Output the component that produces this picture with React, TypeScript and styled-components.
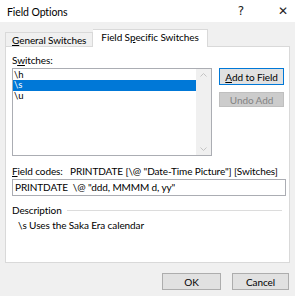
import React from "react";
import styled, { createGlobalStyle } from "styled-components";

const Global = createGlobalStyle`
  html, body { margin: 0; padding: 0; }
  body {
    width: 295px; height: 296px; overflow: hidden;
    background: #f0f0f0;
    font-family: Lato, "Noto Sans", sans-serif;
    font-size: 10px; letter-spacing: -0.1px; color: #000;
  }
`;

const Dialog = styled.div`
  width: 295px; height: 296px; display: flex; flex-direction: column;
  background: #f0f0f0;
`;

const TitleBar = styled.div`
  height: 22px; background: #fff; display: flex; align-items: center;
  padding-left: 7px; padding-right: 5px; font-size: 10.5px;
`;
const Title = styled.div` flex: 1; padding-top: 1px; `;
const TitleBtn = styled.div<{ $w: number; $gap?: number }>`
  width: ${p => p.$w}px; margin-left: ${p => p.$gap ?? 0}px;
  text-align: center; font-size: 12px; color: #222; font-family: "DejaVu Sans", sans-serif;
`;

const TabRow = styled.div`
  height: 24px; display: flex; align-items: flex-end; padding-left: 5px;
`;
const Tab = styled.div<{ $active?: boolean }>`
  height: ${p => (p.$active ? 18 : 14)}px;
  padding: 0 ${p => (p.$active ? 8 : 6)}px;
  display: flex; align-items: center;
  background: ${p => (p.$active ? "#fff" : "#f0f0f0")};
  border: 1px solid #d9d9d9; border-bottom: none;
  ${p => (p.$active ? "margin-bottom:-1px; position:relative; z-index:1; border-left:none;" : "")}
  box-sizing: border-box;
  padding-bottom: ${p => (p.$active ? 3 : 0)}px;
`;

const Panel = styled.div`
  margin: 0 5px; height: 217px; background: #fff; border: 1px solid #d9d9d9;
  box-sizing: border-box; padding: 6px 5px 0 6px; display: flex; flex-direction: column;
`;

const Label = styled.div` height: 14px; line-height: 14px; `;

const SwitchRow = styled.div` display: flex; gap: 7px; margin-top: 1px; `;

const ListBox = styled.div`
  width: 200px; height: 88px; border: 1px solid #abadb3; box-sizing: border-box;
  display: flex;
`;
const ListItems = styled.div` flex: 1; padding-top: 1px; `;
const ListItem = styled.div<{ $sel?: boolean }>`
  height: 10.4px; line-height: 10.4px; padding-left: 1px; font-size: 9.5px;
  background: ${p => (p.$sel ? "#0078d7" : "transparent")};
  color: ${p => (p.$sel ? "#fff" : "#000")};
`;
const ScrollBar = styled.div`
  width: 15px; background: #f0f0f0; display: flex; flex-direction: column;
  justify-content: space-between; align-items: center; padding: 4px 0;
`;

const ButtonCol = styled.div` display: flex; flex-direction: column; gap: 7px; `;
const Button = styled.div<{ $w: number; $variant?: "default" | "disabled" }>`
  width: ${p => p.$w}px; height: ${p => (p.$variant === "disabled" ? 15 : 17)}px;
  box-sizing: border-box; display: flex; align-items: center; justify-content: center;
  background: ${p => (p.$variant === "disabled" ? "#cccccc" : "#e1e1e1")};
  border: 1px solid ${p => (p.$variant === "default" ? "#0078d7" : p.$variant === "disabled" ? "#bfbfbf" : "#adadad")};
  color: ${p => (p.$variant === "disabled" ? "#838383" : "#000")};
`;

const FieldLabel = styled.div` margin-top: 9px; height: 13px; line-height: 13px; white-space: nowrap; `;
const Input = styled.div`
  margin-top: 1px; height: 17px; width: 274px; border: 1px solid #abadb3; box-sizing: border-box;
  padding-left: 2px; line-height: 15px; white-space: pre;
`;

const DescHeader = styled.div` margin-top: 7px; display: flex; align-items: center; gap: 5px; height: 14px; `;
const Rule = styled.div` flex: 1; height: 1px; background: #dcdcdc; margin-right: 2px; `;
const DescText = styled.div` margin-top: 1px; padding-left: 6px; height: 14px; line-height: 14px; `;

const Footer = styled.div`
  display: flex; justify-content: flex-end; gap: 11px; padding: 10px 6px 0 0;
`;

const U = styled.span` text-decoration: underline; `;

export default function App() {
  return (
    <Dialog>
      <Global />
      <TitleBar>
        <Title>Field Options</Title>
        <TitleBtn $w={14}>?</TitleBtn>
        <TitleBtn $w={14} $gap={28}>✕</TitleBtn>
      </TitleBar>
      <TabRow>
        <Tab><U>G</U>eneral Switches</Tab>
        <Tab $active>Field S<U>p</U>ecific Switches</Tab>
      </TabRow>
      <Panel>
        <Label>S<U>w</U>itches:</Label>
        <SwitchRow>
          <ListBox>
            <ListItems>
              <ListItem>\h</ListItem>
              <ListItem $sel>\s</ListItem>
              <ListItem>\u</ListItem>
            </ListItems>
            <ScrollBar>
              <svg width="7" height="4" viewBox="0 0 7 4"><path d="M0.5 3.5 L3.5 0.5 L6.5 3.5" fill="none" stroke="#c4c4c4" /></svg>
              <svg width="7" height="4" viewBox="0 0 7 4"><path d="M0.5 0.5 L3.5 3.5 L6.5 0.5" fill="none" stroke="#c4c4c4" /></svg>
            </ScrollBar>
          </ListBox>
          <ButtonCol>
            <Button $w={65} $variant="default"><U>A</U>dd to Field</Button>
            <Button $w={65} $variant="disabled">Undo Add</Button>
          </ButtonCol>
        </SwitchRow>
        <FieldLabel><U>F</U>ield codes:&nbsp;&nbsp; PRINTDATE [\@ "Date-Time Picture"] [Switches]</FieldLabel>
        <Input>PRINTDATE  \@ "ddd, MMMM d, yy"</Input>
        <DescHeader>Description<Rule /></DescHeader>
        <DescText>\s Uses the Saka Era calendar</DescText>
      </Panel>
      <Footer>
        <Button $w={59}>OK</Button>
        <Button $w={57}>Cancel</Button>
      </Footer>
    </Dialog>
  );
}
